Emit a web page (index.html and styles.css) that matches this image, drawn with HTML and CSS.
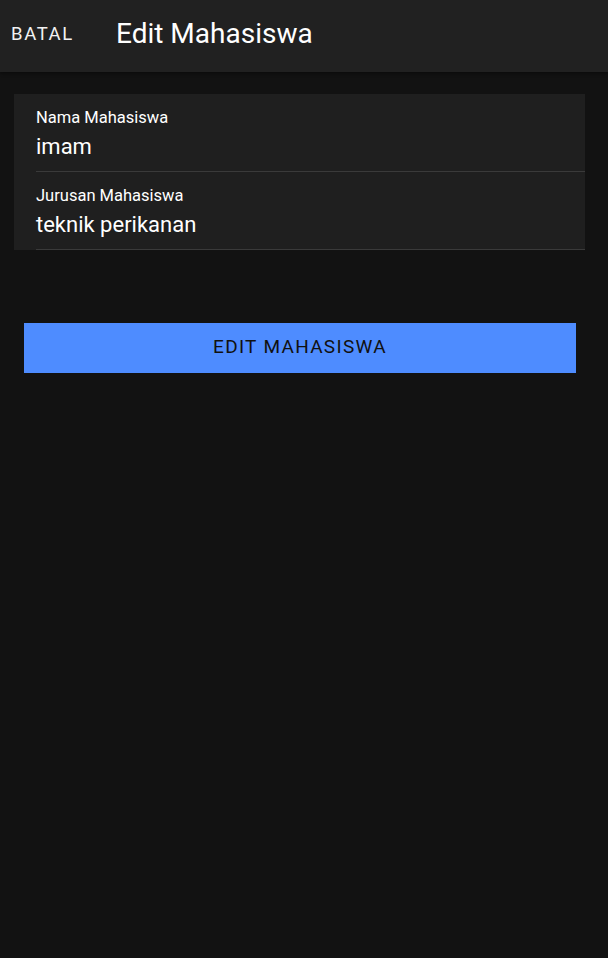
FILE: index.html
```html
<!DOCTYPE html>
<html>
<head>
<meta charset="utf-8">
<link rel="stylesheet" href="styles.css">
</head>
<body>
<header class="appbar">
  <span class="cancel">BATAL</span>
  <h1 class="title">Edit Mahasiswa</h1>
</header>
<main class="content">
  <section class="card">
    <div class="field">
      <div class="label">Nama Mahasiswa</div>
      <div class="value">imam</div>
    </div>
    <div class="field">
      <div class="label">Jurusan Mahasiswa</div>
      <div class="value">teknik perikanan</div>
    </div>
  </section>
  <button class="submit">EDIT MAHASISWA</button>
</main>
</body>
</html>
```
FILE: styles.css
```css
html, body {
  margin: 0;
  padding: 0;
  background: #121212;
  font-family: Roboto, "Noto Sans", sans-serif;
  color: #fff;
  height: 100%;
}
.appbar {
  height: 72px;
  background: #212121;
  display: flex;
  align-items: center;
  box-shadow: 0 2px 3px rgba(0,0,0,0.35);
}
.cancel {
  width: 116px;
  box-sizing: border-box;
  padding-left: 11px;
  font-size: 18.5px;
  letter-spacing: 1.6px;
  font-weight: 400;
  color: #f2f2f2;
  margin-top: -5px;
}
.title {
  margin: 0;
  font-size: 28px;
  font-weight: 400;
  margin-top: -5px;
}
.content {
  padding: 22px 23px 0 14px;
}
.card {
  background: #1f1f1f;
  padding-left: 22px;
}
.field {
  border-bottom: 1px solid #3a3a3a;
  height: 78px;
  box-sizing: border-box;
  padding-top: 14px;
}
.label {
  font-size: 16.5px;
  line-height: 20px;
  letter-spacing: 0;
}
.value {
  font-size: 22px;
  line-height: 28px;
  margin-top: 5px;
}
.submit {
  display: block;
  margin: 73px 9px 0 10px;
  width: calc(100% - 19px);
  height: 50px;
  padding: 0 0 3px;
  border: none;
  background: #4e8cff;
  color: #111;
  font-family: Roboto, sans-serif;
  font-size: 19px;
  letter-spacing: 1.3px;
  font-weight: 400;
}
```
